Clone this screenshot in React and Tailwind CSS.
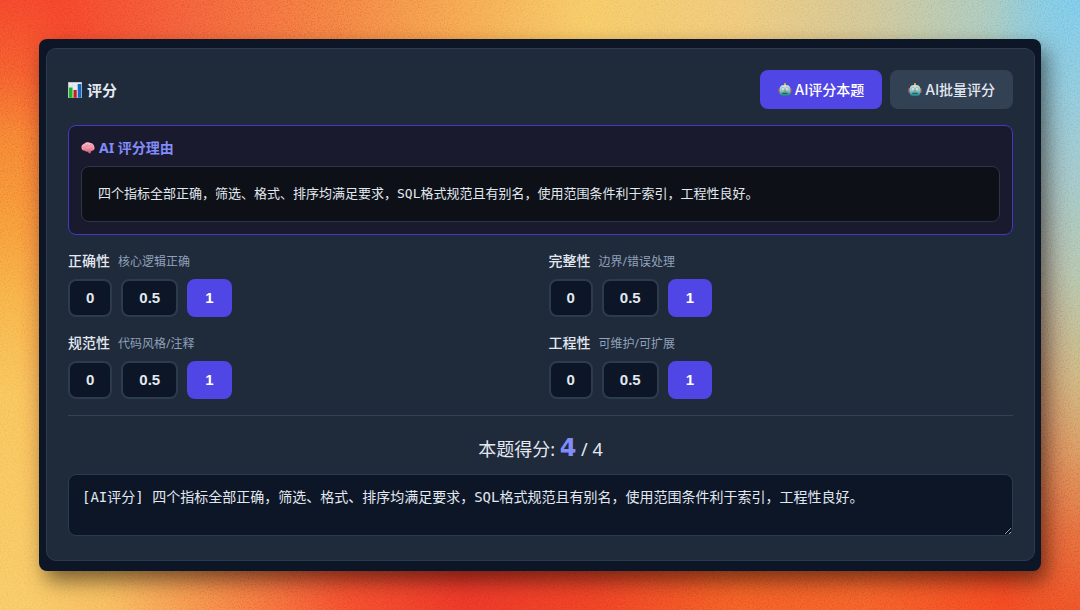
import { useState } from "react";

const REASON =
  "四个指标全部正确，筛选、格式、排序均满足要求，SQL格式规范且有别名，使用范围条件利于索引，工程性良好。";

const CRITERIA = [
  { id: "correct", label: "正确性", hint: "核心逻辑正确" },
  { id: "complete", label: "完整性", hint: "边界/错误处理" },
  { id: "style", label: "规范性", hint: "代码风格/注释" },
  { id: "engineering", label: "工程性", hint: "可维护/可扩展" },
];

const SCORES = [0, 0.5, 1];

function ChartIcon() {
  return (
    <svg viewBox="0 0 28 32" className="h-4 w-3.5 shrink-0" aria-hidden="true">
      <rect x="0.5" y="0.5" width="27" height="31" fill="#e9eff4" stroke="#b9c8d4" />
      <path d="M1 8h26M1 16h26M1 24h26M9.500 1v30M18.500 1v30" stroke="#c7d9e6" strokeWidth="1" />
      <rect x="2" y="11" width="7" height="20.500" fill="#16b821" />
      <rect x="11" y="16" width="6.500" height="15.500" fill="#c91d1d" />
      <rect x="19.500" y="4" width="7" height="27.500" fill="#1664c4" />
    </svg>
  );
}

function BrainIcon() {
  return (
    <svg viewBox="0 0 28 24" className="h-3 w-3.5 shrink-0" aria-hidden="true">
      <defs>
        <linearGradient id="brain-fill" x1="0" y1="0" x2="0" y2="1">
          <stop offset="0" stopColor="#ffc3cf" />
          <stop offset="0.550" stopColor="#f294a8" />
          <stop offset="1" stopColor="#c9556f" />
        </linearGradient>
      </defs>
      <path
        d="M1 12C0 8 3 4 7 3c3-3 9-3 12-1 4 0 7 4 7.500 7 1.500 3 0.500 7-3 8-1 1-2 1.500-3.500 1.500L19 23l-4-1-1-3c-3 1-5 0-6-1.500C4 18 1 15.500 1 12Z"
        fill="url(#brain-fill)"
      />
      <path
        d="M4 11c3-3 5 1 8-2s4 0 7-2M8 6c2 1 4-1 6 0M6 15c4-3 7 2 11-2s5 0 7-2M19 4c0 2 2 3 4 3M14 18c2-2 5-1 8-2"
        fill="none"
        stroke="#c65f7b"
        strokeWidth="1"
        strokeOpacity="0.700"
        strokeLinecap="round"
      />
    </svg>
  );
}

function RobotIcon() {
  return (
    <svg viewBox="0 0 28 28" className="size-3.5 shrink-0" aria-hidden="true">
      <defs>
        <linearGradient id="robot-fill" x1="0" y1="0" x2="0" y2="1">
          <stop offset="0" stopColor="#cfe9e6" />
          <stop offset="0.500" stopColor="#8ccaca" />
          <stop offset="1" stopColor="#167a80" />
        </linearGradient>
      </defs>
      <path d="M14 2v3" stroke="#d3a52e" strokeWidth="3" />
      <circle cx="14" cy="2.200" r="2.200" fill="#f5b82f" />
      <rect x="0.500" y="10" width="4" height="10" rx="2" fill="#b65048" />
      <rect x="23.500" y="10" width="4" height="10" rx="2" fill="#b65048" />
      <path d="M7 5c3-1.500 11-1.500 14 0 3.500 2 4 6 4 10 0 5-0.500 8-3 10-3 1.500-13 1.500-16 0-2.500-2-3-5-3-10 0-4 0.500-8 4-10Z" fill="url(#robot-fill)" />
      <circle cx="9.500" cy="12" r="3" fill="#f2fcfc" stroke="#5aa0a5" strokeWidth="1" />
      <circle cx="18.500" cy="12" r="3" fill="#f2fcfc" stroke="#5aa0a5" strokeWidth="1" />
      <circle cx="9.500" cy="12" r="0.900" fill="#c4544b" />
      <circle cx="18.500" cy="12" r="0.900" fill="#c4544b" />
      <path d="m14 13.500-2 3.500h4Z" fill="#d64d43" />
      <rect x="8.500" y="19.500" width="11" height="2.500" rx="1.200" fill="#1b626b" />
    </svg>
  );
}

function Backdrop() {
  return (
    <div className="absolute inset-0 -z-10 overflow-hidden" aria-hidden="true">
      <div className="absolute inset-0 bg-[linear-gradient(to_right,#f8cb68_0%,#f7bd60_10%,#f58c49_20%,#f4502f_32%,#ec3828_43%,#ef4326_55%,#f36026_68%,#f4622a_80%,#f44a22_93%,#ee5428_100%)]" />
      <div className="absolute inset-0 bg-[linear-gradient(to_right,#f5502f_0%,#f5452c_5%,#f3643c_18%,#f38343_31%,#f5a750_42%,#f6cb68_54%,#efca7c_68%,#d3c797_80%,#aecabd_91%,#80cbe8_100%)] [mask-image:linear-gradient(to_bottom,black_5%,transparent_95%)]" />
      <div className="absolute inset-y-0 left-0 w-20 bg-[linear-gradient(to_bottom,#f4482c_0%,#f4602f_12%,#f58534_22%,#f6a03c_38%,#f7b64c_50%,#f8c65e_65%,#f8cb68_100%)] [mask-image:linear-gradient(to_right,black_20%,transparent)]" />
      <div className="absolute inset-y-0 right-0 w-20 bg-[linear-gradient(to_bottom,#80cbe8_0%,#8ecbe0_12%,#a2c9cc_28%,#b5c6ae_45%,#cdb681_62%,#d99a62_74%,#e3703f_87%,#ee5428_100%)] [mask-image:linear-gradient(to_left,black_5%,transparent)]" />
      <svg className="absolute inset-0 size-full opacity-10 mix-blend-overlay">
        <filter id="grain" x="0" y="0" width="100%" height="100%">
          <feTurbulence type="fractalNoise" baseFrequency="0.700" numOctaves="3" />
          <feColorMatrix
            type="matrix"
            values="2.500 0 0 0 -0.850  2.500 0 0 0 -0.850  2.500 0 0 0 -0.850  0 0 0 0 1"
          />
        </filter>
        <rect width="100%" height="100%" filter="url(#grain)" />
      </svg>
    </div>
  );
}

function Criterion({ item, value, onChange }) {
  return (
    <div role="group" aria-labelledby={item.id}>
      <div className="flex h-5 items-baseline gap-2">
        <span id={item.id} className="text-sm leading-5 font-medium">{item.label}</span>
        <span className="text-xs leading-5 text-slate-400">{item.hint}</span>
      </div>
      <div className="mt-2 flex gap-[9px]">
        {SCORES.map((score) => (
          <button
            key={score}
            type="button"
            aria-pressed={value === score}
            onClick={() => onChange(score)}
            className={
              "h-[38px] rounded-lg border-2 px-4 font-['Liberation_Sans',sans-serif] text-[15px] leading-5 font-bold " +
              (value === score
                ? "border-[#4f46e5] bg-[#4f46e5] text-white"
                : "border-[#2d3b4e] bg-[#0d1627] text-slate-200")
            }
          >
            {score}
          </button>
        ))}
      </div>
    </div>
  );
}

export default function App() {
  const [scores, setScores] = useState({ correct: 1, complete: 1, style: 1, engineering: 1 });
  const [comment, setComment] = useState("[AI评分] " + REASON);
  const total = CRITERIA.reduce((sum, item) => sum + scores[item.id], 0);

  return (
    <main className="relative isolate min-h-screen p-[39px] font-['Noto_Sans','Noto_Sans_CJK_SC',sans-serif] text-slate-200">
      <Backdrop />
      <div className="rounded-lg bg-[#0d1627] pt-[9px] pr-1.5 pb-[10px] pl-[7px] shadow-[6px_10px_20px_rgba(0,0,0,0.5)]">
        <section className="rounded-[10px] border border-[#2c3b4d] bg-[#1f2a3b] px-[21px] pt-[21px] pb-6">
          <header className="flex items-center justify-between">
            <h2 className="flex items-center gap-[5px] text-[15px] leading-6 font-bold">
              <ChartIcon />
              评分
            </h2>
            <div className="flex gap-2 font-['Inter','Noto_Sans_CJK_SC',sans-serif] text-sm leading-5 font-medium">
              <button
                type="button"
                className="flex h-[39px] items-center gap-[3px] rounded-lg bg-[#4f46e5] px-[18px] text-white"
              >
                <RobotIcon />
                AI评分本题
              </button>
              <button
                type="button"
                className="flex h-[39px] items-center gap-[3px] rounded-lg bg-[#334154] px-[18px] text-slate-200"
              >
                <RobotIcon />
                AI批量评分
              </button>
            </div>
          </header>

          <section className="mt-4 rounded-lg border border-[#4338ca] bg-[#1a1a2e] p-3">
            <h3 className="flex items-center gap-1 text-sm leading-5 font-bold text-[#818cf8]">
              <BrainIcon />
              AI 评分理由
            </h3>
            <p className="mt-2 rounded-lg border border-[#2a3646] bg-[#0d1117] p-4 font-['DejaVu_Sans_Mono','Noto_Sans_CJK_SC',monospace] text-[13px] leading-[22px]">
              {REASON}
            </p>
          </section>

          <div className="mt-4 grid grid-cols-2 gap-4">
            {CRITERIA.map((item) => (
              <Criterion
                key={item.id}
                item={item}
                value={scores[item.id]}
                onChange={(score) => setScores({ ...scores, [item.id]: score })}
              />
            ))}
          </div>

          <div className="mt-4 border-t border-[#334155] pt-4 text-center text-lg leading-[33px]">
            本题得分:{" "}
            <strong className="font-['DejaVu_Sans',sans-serif] text-2xl leading-8 font-bold text-[#818cf8]">
              {total}
            </strong>{" "}
            / 4
          </div>
          <textarea
            aria-label="评语"
            value={comment}
            onChange={(event) => setComment(event.target.value)}
            className="mt-2 block h-[62px] w-full resize-y rounded-lg border border-[#2c3b4d] bg-[#0d1627] px-[13px] py-3 font-['DejaVu_Sans_Mono','Noto_Sans_CJK_SC',monospace] text-sm leading-5 outline-none"
          />
        </section>
      </div>
    </main>
  );
}
